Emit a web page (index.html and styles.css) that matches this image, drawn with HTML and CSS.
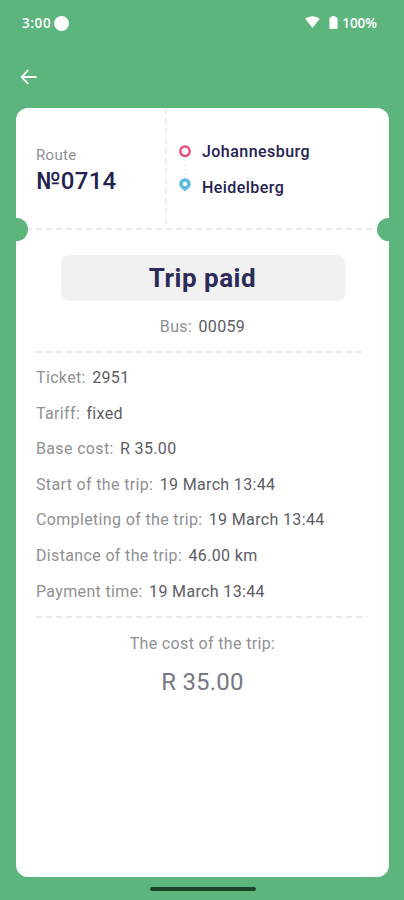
FILE: index.html
```html
<!DOCTYPE html>
<html lang="en">
<head>
    <meta charset="UTF-8">
    <meta name="viewport" content="width=device-width, initial-scale=1.0">
    <title>Trip paid</title>
    <link rel="stylesheet" href="styles.css">
</head>
<body>

<div class="status-bar">
    <span class="clock">3:00</span>
    <span class="status-dot"></span>
    <svg class="wifi" width="15" height="12" viewBox="0 0 15 12">
        <path d="M0.3 2.8C4.4 -0.6 10.6 -0.6 14.7 2.8L7.5 12Z" fill="#fff"/>
    </svg>
    <svg class="battery" width="9" height="13" viewBox="0 0 9 13">
        <path d="M2.6 0h3.8v1.3h1a1.2 1.2 0 0 1 1.2 1.2v9.2a1.2 1.2 0 0 1-1.2 1.2H1.6a1.2 1.2 0 0 1-1.2-1.2V2.5a1.2 1.2 0 0 1 1.2-1.2h1z" fill="#fff"/>
    </svg>
    <span class="percent">100%</span>
</div>

<div class="toolbar">
    <svg class="back" width="18" height="16" viewBox="0 0 18 16">
        <path d="M8.2 1.2L1.6 8l6.6 6.8M2 8h14.5" fill="none" stroke="#fff" stroke-width="1.8"/>
    </svg>
</div>

<div class="ticket">
    <div class="ticket-head">
        <div class="route">
            <div class="route-label">Route</div>
            <div class="route-number">№0714</div>
        </div>
        <div class="stops">
            <svg class="stops-icon" width="12" height="48" viewBox="0 0 12 48">
                <circle cx="6" cy="6.2" r="4.7" fill="#fff" stroke="#e4517b" stroke-width="2.5"/>
                <path d="M6 15v15" stroke="#ececef" stroke-width="1" stroke-dasharray="2 2.5"/>
                <path d="M6 46.4C3.8 44 0.2 42.4 0.2 39a5.8 5.8 0 0 1 11.6 0C11.8 42.4 8.2 44 6 46.4z" fill="#5dbbe2"/>
                <circle cx="6" cy="39" r="2.2" fill="#fff"/>
            </svg>
            <div class="stops-names">
                <div>Johannesburg</div>
                <div>Heidelberg</div>
            </div>
        </div>
        <span class="notch notch-left"></span>
        <span class="notch notch-right"></span>
    </div>

    <div class="ticket-body">
        <div class="paid">Trip paid</div>
        <div class="bus">Bus: <span class="value">00059</span></div>
        <div class="line"></div>
        <div class="info">
            <div>Ticket: <span class="value">2951</span></div>
            <div>Tariff: <span class="value">fixed</span></div>
            <div>Base cost: <span class="value">R 35.00</span></div>
            <div>Start of the trip: <span class="value">19 March 13:44</span></div>
            <div>Completing of the trip: <span class="value">19 March 13:44</span></div>
            <div>Distance of the trip: <span class="value">46.00 km</span></div>
            <div>Payment time: <span class="value">19 March 13:44</span></div>
        </div>
        <div class="line"></div>
        <div class="cost-label">The cost of the trip:</div>
        <div class="cost">R 35.00</div>
    </div>
</div>

<div class="home-bar"></div>

</body>
</html>
```
FILE: styles.css
```css
* {
    box-sizing: border-box;
}
body {
    margin: 0;
    height: 900px;
    overflow: hidden;
    display: flex;
    flex-direction: column;
    background: #5db57e;
    font-family: Roboto, sans-serif;
    font-size: 16px;
    letter-spacing: 0.35px;
    color: #8f8f94;
}
.status-bar {
    display: flex;
    align-items: center;
    height: 46px;
    padding: 0 27px 0 22px;
    color: #fff;
    font-family: "Open Sans", sans-serif;
    font-size: 13.5px;
    font-weight: 600;
    letter-spacing: 0;
}
.clock {
    margin-top: -1px;
    letter-spacing: 0.6px;
}
.status-dot {
    width: 15px;
    height: 15px;
    margin-left: 3px;
    border-radius: 50%;
    background: #fff;
}
.wifi {
    margin-left: auto;
    margin-right: 9px;
    margin-top: -2px;
}
.battery {
    margin-right: 4px;
    margin-top: -1px;
}
.percent {
    margin-top: -1px;
}
.toolbar {
    display: flex;
    align-items: center;
    height: 62px;
    padding-left: 20px;
}
.ticket {
    height: 769px;
    margin: 0 15px 0 16px;
    border-radius: 12px;
    background: #fff;
}
.ticket-head {
    position: relative;
    display: flex;
    height: 122px;
    background: repeating-linear-gradient(90deg, #e9e9ec 0 6px, transparent 6px 10px) 10px 100% / 100% 2px no-repeat;
}
.route {
    width: 151px;
    padding: 37px 0 0 20px;
    background: repeating-linear-gradient(180deg, #ededf0 0 6px, transparent 6px 10px) 100% 0 / 2px 100% no-repeat;
}
.route-label {
    font-size: 15px;
    line-height: 20px;
}
.route-number {
    margin-top: 1px;
    color: #24224f;
    font-size: 24px;
    font-weight: 500;
    line-height: 30px;
    letter-spacing: 0.3px;
}
.stops {
    display: flex;
    padding: 37px 0 0 12px;
}
.stops-names {
    margin: -11px 0 0 11px;
    color: #24224f;
    font-size: 16px;
    font-weight: 500;
    line-height: 35.5px;
    letter-spacing: 0.45px;
}
.notch {
    position: absolute;
    top: 110px;
    width: 12px;
    height: 23px;
    background: #5db57e;
}
.notch-left {
    left: 0;
    border-radius: 0 12px 12px 0;
}
.notch-right {
    right: 0;
    border-radius: 12px 0 0 12px;
}
.ticket-body {
    padding: 25px 20px 0 20px;
}
.paid {
    width: 284px;
    height: 46px;
    margin: 0 auto;
    border-radius: 8px;
    background: #f1f1f1;
    color: #2b2a58;
    font-size: 26px;
    font-weight: 700;
    line-height: 46px;
    letter-spacing: 0.5px;
    text-align: center;
}
.bus {
    margin-top: 16px;
    line-height: 20px;
    text-align: center;
}
.value {
    margin-left: 2px;
    color: #5c5c66;
}
.line {
    height: 2px;
    margin-right: 2px;
    background: repeating-linear-gradient(90deg, #e9e9ec 0 6px, transparent 6px 10px);
}
.bus + .line {
    margin-top: 14px;
}
.info {
    padding: 7px 0;
    line-height: 35.6px;
}
.cost-label {
    margin-top: 16px;
    line-height: 20px;
    text-align: center;
}
.cost {
    margin-top: 13px;
    color: #777785;
    font-size: 24px;
    line-height: 30px;
    letter-spacing: 0.2px;
    text-align: center;
}
.home-bar {
    width: 106px;
    height: 4px;
    margin: 10px 0 0 150px;
    border-radius: 2px;
    background: #1b4329;
}
```
